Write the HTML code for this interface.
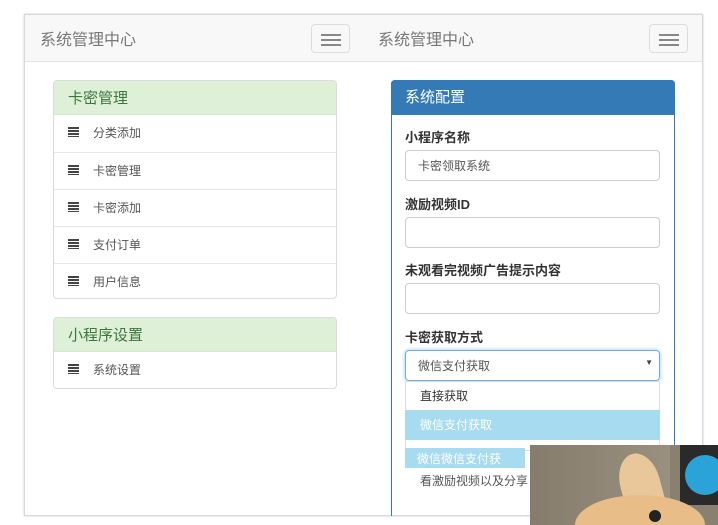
<!DOCTYPE html>
<html><head><meta charset="utf-8"><style>
*{box-sizing:border-box;margin:0;padding:0}
html,body{width:718px;height:525px;overflow:hidden}
body{background:#fff;position:relative;font-family:"Liberation Sans","Noto Sans CJK SC",sans-serif;color:#333}
.abs{position:absolute}
.outer{left:24px;top:14px;width:679px;height:502px;border:1px solid #d8d8d8;box-shadow:0 0 2px #ccc}
.hdr{top:15px;height:47px;background:#f8f8f8;border-bottom:1px solid #e3e3e3}
.title{font-size:16px;color:#777;top:26px}
.tog{width:39px;height:29px;border:1px solid #ddd;border-radius:4px;top:24px;background:#f8f8f8}
.tog i{position:absolute;left:9px;width:20px;height:2px;background:#888}
.pnl{border:1px solid #dcdcdc;border-radius:4px;background:#fff;overflow:hidden}
.ph{height:34px;background:#dff0d8;color:#3c763d;font-size:15px;padding:6px 14px;border-bottom:1px solid #d6e9c6}
.it{height:37px;border-top:1px solid #e6e6e6;font-size:12px;color:#555;padding:9px 0 0 39px;position:relative}
.ph+.it{border-top:none}
.ic{position:absolute;left:14px;top:12px;width:11px;height:10px;background:repeating-linear-gradient(#444 0 2px,transparent 2px 3px)}
.lbl{font-size:13px;font-weight:bold;color:#333;left:405px}
.inp{left:405px;width:255px;height:31px;border:1px solid #ccc;border-radius:4px;font-size:12px;color:#555;padding:6px 12px}
</style></head><body>
<div class="abs outer"></div>
<div class="abs hdr" style="left:25px;width:677px"></div>
<div class="abs title" style="left:40px">系统管理中心</div>
<div class="abs tog" style="left:311px"><i style="top:9px"></i><i style="top:14px"></i><i style="top:19px"></i></div>
<div class="abs title" style="left:378px">系统管理中心</div>
<div class="abs tog" style="left:649px"><i style="top:9px"></i><i style="top:14px"></i><i style="top:19px"></i></div>

<div class="abs pnl" style="left:53px;top:80px;width:284px;height:219px">
<div class="ph">卡密管理</div>
<div class="it"><span class="ic"></span>分类添加</div>
<div class="it"><span class="ic"></span>卡密管理</div>
<div class="it"><span class="ic"></span>卡密添加</div>
<div class="it"><span class="ic"></span>支付订单</div>
<div class="it"><span class="ic"></span>用户信息</div>
</div>
<div class="abs pnl" style="left:53px;top:317px;width:284px;height:72px">
<div class="ph">小程序设置</div>
<div class="it"><span class="ic"></span>系统设置</div>
</div>

<div class="abs" style="left:391px;top:80px;width:284px;height:436px;border:1px solid #337ab7;border-bottom:none;border-radius:4px 4px 0 0"></div>
<div class="abs" style="left:391px;top:80px;width:284px;height:35px;background:#337ab7;color:#fff;font-size:15px;padding:6px 14px;border-radius:4px 4px 0 0">系统配置</div>
<div class="abs lbl" style="top:127px">小程序名称</div>
<div class="abs inp" style="top:150px">卡密领取系统</div>
<div class="abs lbl" style="top:194px">激励视频ID</div>
<div class="abs inp" style="top:217px"></div>
<div class="abs lbl" style="top:260px">未观看完视频广告提示内容</div>
<div class="abs inp" style="top:283px"></div>
<div class="abs lbl" style="top:327px">卡密获取方式</div>
<div class="abs inp" style="top:350px;border-color:#66afe9;box-shadow:0 0 4px #9cc8ec">微信支付获取<span style="position:absolute;right:6px;top:7px;font-size:8px;color:#444">▼</span></div>
<div class="abs" style="left:405px;top:381px;width:255px;height:70px;background:#fff;border:1px solid #ddd"></div>
<div class="abs" style="left:420px;top:387px;font-size:12px;color:#333">直接获取</div>
<div class="abs" style="left:405px;top:410px;width:255px;height:30px;background:#a6dbf0;color:#fff;font-size:12px;padding:6px 15px">微信支付获取</div>
<div class="abs" style="left:405px;top:448px;width:120px;height:20px;background:#a6dbf0;color:#fff;font-size:12px;padding:2px 12px">微信微信支付获</div>
<div class="abs" style="left:420px;top:472px;font-size:12px;color:#555">看激励视频以及分享</div>

<div class="abs" style="left:530px;top:445px;width:188px;height:80px;background:#8a8070;overflow:hidden">
<div class="abs" style="left:0;top:0;width:140px;height:80px;background:linear-gradient(90deg,#857c6d,#9a907f)"></div>
<div class="abs" style="left:150px;top:0;width:38px;height:60px;background:#2a2a2a"></div>
<div class="abs" style="left:155px;top:10px;width:40px;height:40px;border-radius:50%;background:#2aa3d8"></div>
<div class="abs" style="left:90px;top:8px;width:40px;height:60px;background:#e9c79a;border-radius:50% 50% 0 0;transform:rotate(-15deg)"></div>
<div class="abs" style="left:45px;top:50px;width:130px;height:60px;background:#e8bd88;border-radius:50%"></div>
<div class="abs" style="left:119px;top:65px;width:12px;height:12px;background:#222;border-radius:50%"></div>
</div>
</body></html>
